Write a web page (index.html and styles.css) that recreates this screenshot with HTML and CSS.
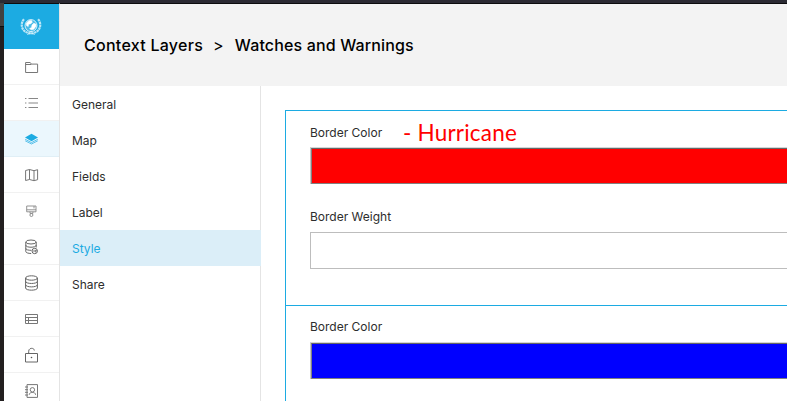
FILE: index.html
```html
<!DOCTYPE html>
<html lang="en">
<head>
<meta charset="utf-8">
<title>Watches and Warnings</title>
<link rel="stylesheet" href="styles.css">
</head>
<body>
<div class="window">
  <div class="edge"><div class="edge-top"></div></div>
  <nav class="rail">
    <a class="logo">
      <svg width="22" height="20" viewBox="0 0 22 20" fill="none" stroke="#fff">
        <circle cx="11" cy="8.600" r="6" stroke-width=".8" fill="#fff" fill-opacity=".2"/>
        <path d="M6.500 6l2.500-2.200 2.500-.2.800 1.600-1.400 1.500-2.400.6-.3 2.200-1.700-1zM12 8l1.800-1.800 2 .8.200 2.200-2.200 3-2.600.6-1.600-1.200 2-1.200z" fill="#fff" stroke-width=".6"/>
        <path d="M4 2.200C1 5.500 1 10.500 4 13.500c1.800 1.900 4 2.600 7 2.900 3-.3 5.200-1 7-2.900 3-3 3-8 0-11.300" stroke-width="2.200" stroke-dasharray="2.400 .5" stroke-opacity=".7"/>
        <path d="M7 17.700l4-1.600 4 1.600" stroke-width=".8" stroke-opacity=".6"/>
      </svg>
    </a>
    <a class="tool"><svg class="icon" viewBox="0 0 14 14"><path d="M.6 12.500V2.500h4.600l1.200 1.600h6.200v8.400zM.6 4.500h5.800"/></svg></a>
    <a class="tool"><svg class="icon list" viewBox="0 0 14 14"><path d="M3.500 2.500H13M3.500 7H13M3.500 11.500H13M0 2.500h1.400M0 7h1.400M0 11.500h1.400"/></svg></a>
    <a class="tool active"><svg class="icon" viewBox="0 0 14 14"><path class="solid" d="M6.500 1.800l6.500 3.600L6.500 9.200 0 5.400z"/><path d="M.2 7.300l6.300 3.300 6.300-3.300M.2 8.800L6.500 12l6.300-3.200" stroke-width=".7"/></svg></a>
    <a class="tool"><svg class="icon" viewBox="0 0 14 14"><path d="M.6 2.500L4.500 1.500l4.500 1.200 3.600-1v10l-3.600 1-4.500-1.200-3.900 1zM4.500 1.500v10M9 2.700v10"/></svg></a>
    <a class="tool"><svg class="icon brush" viewBox="0 0 14 14"><path d="M1.700 2h9.300v5.800H1.700zM1.700 5.800H11M9 2v2.400M5 7.800v1.600h2.900V7.800"/><circle cx="6.400" cy="11" r="1.500"/></svg></a>
    <a class="tool"><svg class="icon data" viewBox="0 0 14 16"><ellipse cx="6" cy="3" rx="5.200" ry="2"/><path d="M.8 3v9.500c0 1.200 2.500 2 5.400 2M11.200 3v5.500M.8 6.200c0 2.700 10.400 2.700 10.400 0M.8 9.400c0 1.300 2.700 2 5.600 1.900"/><circle cx="9.700" cy="12" r="2.700"/><path d="M8.200 12h3M10.200 10.800l1.200 1.200-1.200 1.200"/></svg></a>
    <a class="tool"><svg class="icon data" viewBox="0 0 14 16"><ellipse cx="6.500" cy="3" rx="5.900" ry="2.200"/><path d="M.6 3v10c0 2.900 11.800 2.900 11.800 0V3M.6 6.300c0 2.900 11.800 2.900 11.800 0M.6 9.700c0 2.900 11.800 2.900 11.800 0"/></svg></a>
    <a class="tool"><svg class="icon" viewBox="0 0 14 14"><path d="M.5 2.500h12v9H.5zM.5 5.500h12M.5 8.500h12M3.500 5.500v6"/></svg></a>
    <a class="tool"><svg class="icon data" viewBox="0 0 14 16"><path d="M.5 6.500h12v8.500H.5zM3.700 6.500V4.200c0-3.700 5.600-3.700 5.600-.7"/><circle class="dot" cx="6.500" cy="10.500" r=".8"/></svg></a>
    <a class="tool"><svg class="icon" viewBox="0 0 14 14"><path d="M2 .6h10.500v12.800H2zM0 3h3M0 5.700h3M0 8.300h3M0 11h3M4.200 10.800c.3-2 1.500-2.300 3.200-2.300s2.900.3 3.200 2.300"/><circle cx="7.400" cy="5.800" r="2.200"/></svg></a>
  </nav>
  <div class="page">
    <header class="header"><span class="crumb">Context Layers</span><span class="sep">&gt;</span><span>Watches and Warnings</span></header>
    <div class="body">
      <ul class="menu">
        <li>General</li>
        <li>Map</li>
        <li>Fields</li>
        <li>Label</li>
        <li class="selected">Style</li>
        <li>Share</li>
      </ul>
      <main class="content">
        <section class="rule">
          <div class="label">Border Color<span class="note">- Hurricane</span></div>
          <div class="swatch"><div class="fill red"></div></div>
          <div class="label weight">Border Weight</div>
          <div class="input"></div>
        </section>
        <section class="rule next">
          <div class="label">Border Color</div>
          <div class="swatch"><div class="fill blue"></div></div>
        </section>
      </main>
    </div>
  </div>
</div>
</body>
</html>
```

FILE: styles.css
```css
* { box-sizing: border-box; }
body {
  margin: 0;
  height: 401px;
  overflow: hidden;
  background: #fff;
  color: #2d2d2d;
  font: 12px/18px Inter, "Liberation Sans", sans-serif;
}
.window {
  display: flex;
  height: 401px;
  border-top: 3px solid #2b2a33;
  overflow: hidden;
}
.edge { flex: 0 0 4px; background: #231f20; }
.edge-top { height: 24px; background: #414141; border-bottom: 1px solid #0c0c0d; }
.rail {
  flex: 0 0 56px;
  border-top: 1px solid #0c0c0d;
  border-right: 1px solid #e4e4e4;
}
.logo {
  display: flex;
  align-items: center;
  justify-content: center;
  height: 45px;
  padding-right: 1px;
  background: #1cabe2;
}
.tool {
  display: flex;
  align-items: center;
  justify-content: center;
  height: 36px;
  padding-left: 1px;
  border-bottom: 1px solid #f1f1f1;
}
.tool.active { background: #ebf7fd; color: #1cabe2; border-color: #e0eff6; }
.icon { width: 14px; height: 14px; fill: none; stroke: #777; stroke-width: 1; }
.icon.list { stroke: #888; stroke-width: 1.2; }
.icon.brush { stroke: #888; stroke-width: .9; }
.icon.data { height: 16px; stroke: #666; }
.active .icon { stroke: #1cabe2; }
.icon .solid { fill: #1cabe2; stroke: none; }
.icon .dot { fill: #555; stroke: none; }
.page { flex: 1; min-width: 0; border-top: 1px solid #0c0c0d; }
.header {
  display: flex;
  align-items: center;
  height: 82px;
  padding-left: 24px;
  background: #f3f3f3;
  color: #000;
  font-size: 16px;
  font-weight: 500;
  letter-spacing: .15px;
}
.crumb { letter-spacing: .27px; }
.sep { margin: 0 11px 0 10px; font-weight: 400; }
.body { display: flex; height: 316px; }
.menu {
  flex: 0 0 201px;
  margin: 0;
  padding: 0;
  list-style: none;
  border-right: 1px solid #e4e4e4;
}
.menu li { height: 36px; padding: 10px 12px 8px; }
.menu .selected { margin-right: -1px; background: #dbeef8; color: #1cabe2; }
.content { flex: 1; min-width: 0; padding: 24px 0 0 24px; }
.rule {
  height: 195px;
  padding: 13px 0 0 24px;
  border-top: 1px solid #1cabe2;
  border-left: 1px solid #1cabe2;
}
.rule.next { padding-top: 12px; }
.rule.next .swatch { margin-top: 6px; }
.label { position: relative; height: 18px; }
.note {
  position: absolute;
  left: 93px;
  top: -4px;
  color: #f00;
  font: 22.500px/26px Lato, "Noto Sans", sans-serif;
  letter-spacing: .2px;
  white-space: nowrap;
}
.swatch {
  height: 37px;
  margin-top: 5px;
  border-top: 1px solid #d5d5d5;
  border-left: 1px solid #c5c5c5;
}
.fill { height: 36px; border: 1px solid #808080; border-top-color: #666; border-right: 0; }
.red { background: #f00; }
.blue { background: #00f; }
.weight { margin-top: 24px; }
.input { height: 37px; margin-top: 6px; border: 1px solid #bdbdbd; border-right: 0; }
```
